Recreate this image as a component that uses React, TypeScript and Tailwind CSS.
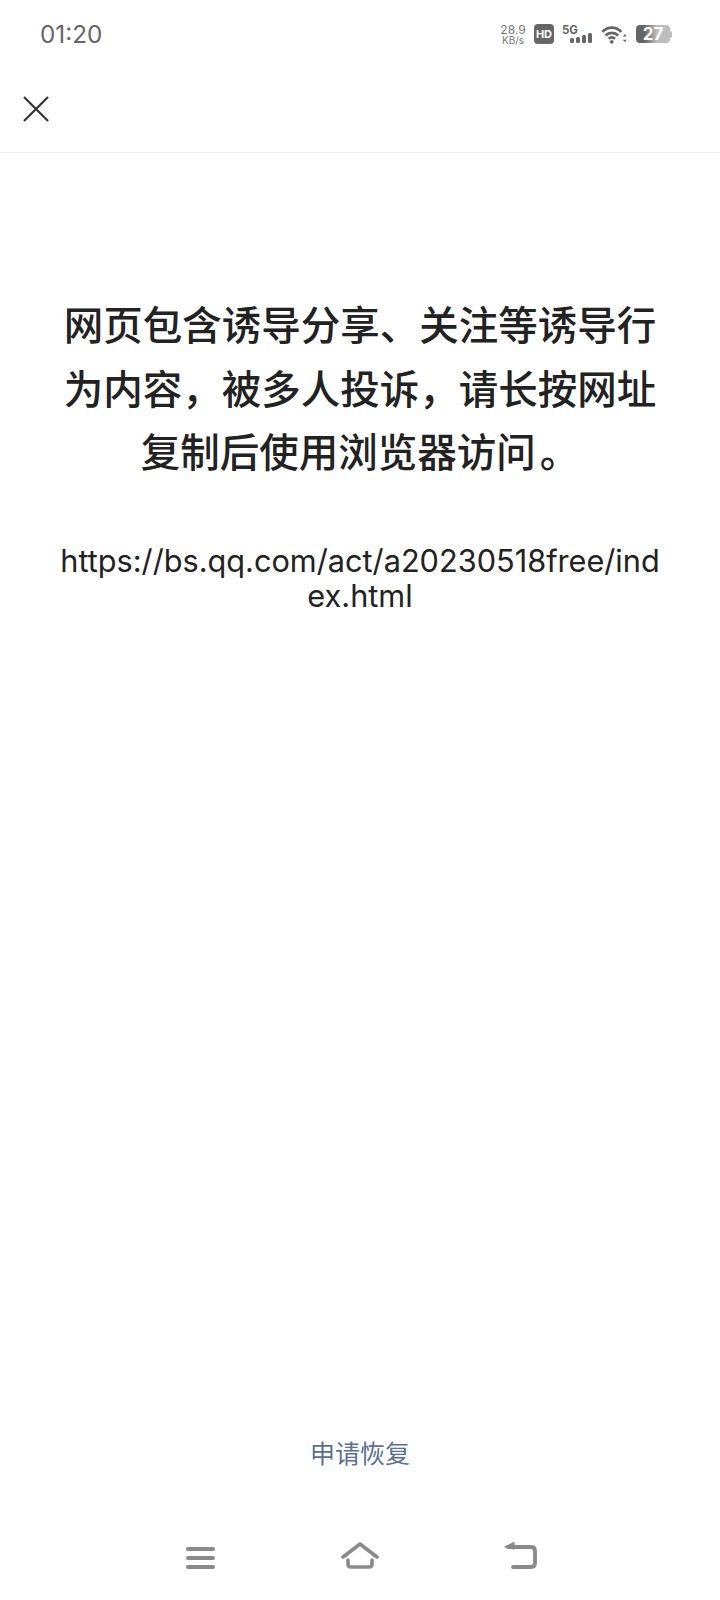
export default function App() {
  return (
    <div className="relative flex h-[1600px] w-[720px] flex-col overflow-hidden bg-white font-['Inter','Noto_Sans_CJK_SC',sans-serif]">
      <div className="flex h-[68px] shrink-0 items-center justify-between pl-[40px] pr-[48px]">
        <span className="text-[24.3px] leading-none text-[#666666]">01:20</span>
        <div className="flex items-center">
          <div className="flex w-[24px] flex-col items-center text-[#777777]">
            <span className="text-[12px] leading-[11px]">28.9</span>
            <span className="text-[10px] leading-[10px]">KB/s</span>
          </div>
          <div className="ml-[9px] flex h-[20px] w-[20px] items-center justify-center rounded-[4px] bg-[#666666] text-[11px] font-bold text-white">HD</div>
          <svg width="31" height="20" viewBox="0 0 31 20" className="ml-[8px]">
            <text x="0" y="10" fontSize="11.5" fontWeight="700" fill="#666666" fontFamily="Inter">5G</text>
            <rect x="8" y="14" width="4" height="5" rx="1.5" fill="#666666" />
            <rect x="14" y="13" width="4" height="6" rx="1.5" fill="#666666" />
            <rect x="20" y="11" width="4" height="8" rx="1.5" fill="#666666" />
            <rect x="26" y="9" width="4" height="10" rx="1.5" fill="#666666" />
          </svg>
          <svg width="28" height="19" viewBox="0 0 26 18" className="ml-[8px]" fill="none" stroke="#666666" strokeWidth="2.6" strokeLinecap="butt">
            <path d="M1 6.5C6 1 14 1 19 6.5" />
            <path d="M4 10C7.5 6.5 12.5 6.5 16 10" />
            <path d="M7 13C8.8 11.5 11.2 11.5 13 13" />
            <circle cx="10" cy="16" r="1.7" fill="#666666" stroke="none" />
            <path d="M20.5 11l1.8 -2.4 1.8 2.4zM20.5 14l1.8 2.4 1.8 -2.4z" fill="#666666" stroke="none" />
          </svg>
          <div className="ml-[7px] flex items-center">
            <div className="flex h-[18px] w-[34px] items-center justify-center rounded-[4px] bg-linear-to-r from-[#666666] from-[25%] to-[#bdbdbd] to-[60%]">
              <span className="text-[17px] font-bold leading-[18px] text-white">27</span>
            </div>
            <div className="h-[7px] w-[2px] rounded-r-sm bg-[#bdbdbd]" />
          </div>
        </div>
      </div>

      <div className="flex h-[85px] shrink-0 items-center border-b border-[#f0f0f0] pl-[22px]">
        <svg width="28" height="28" viewBox="0 0 28 28" fill="none" stroke="#333333" strokeWidth="2.2" className="-mt-[3px]">
          <path d="M2 2L26 26M26 2L2 26" />
        </svg>
      </div>

      <div className="flex flex-1 flex-col items-center px-[60px] pt-[142px]">
        <p className="w-full text-center text-[39.5px] font-medium leading-[63.5px] text-[#222222]">
          网页包含诱导分享、关注等诱导行为内容，被多人投诉，请长按网址复制后使用浏览器访问<span className="ml-[4px]">。</span>
        </p>
        <p className="mt-[57px] w-full break-all text-center text-[30.7px] leading-[35px] text-[#222222]">
          https://bs.qq.com/act/a20230518free/index.html
        </p>
      </div>

      <div className="flex shrink-0 justify-center">
        <span className="text-[25px] leading-[32px] text-[#5b7094]">申请恢复</span>
      </div>

      <div className="flex h-[130px] shrink-0 items-end justify-center pb-[31px] pl-[2px]">
        <svg width="29" height="22" viewBox="0 0 29 22" fill="none" stroke="#8a8a8a" strokeWidth="4" strokeLinecap="round">
          <path d="M2 2H27M2 11H27M2 20H27" />
        </svg>
        <svg width="38" height="27" viewBox="0 0 38 27" fill="none" stroke="#8a8a8a" strokeWidth="3.6" strokeLinecap="round" strokeLinejoin="round" className="ml-[126px]">
          <path d="M2 15L19 2L36 15" />
          <path d="M7 18V22Q7 25 10 25H28Q31 25 31 22V18" />
        </svg>
        <svg width="33" height="28" viewBox="0 0 33 28" fill="none" stroke="#8a8a8a" strokeWidth="3.8" strokeLinecap="round" strokeLinejoin="round" className="ml-[125px]">
          <path d="M4 6H27Q31 6 31 10V22Q31 26 27 26H9" />
          <path d="M1 6L10 1.5V8Z" fill="#8a8a8a" stroke="#8a8a8a" strokeWidth="1.2" />
        </svg>
      </div>
    </div>
  );
}
